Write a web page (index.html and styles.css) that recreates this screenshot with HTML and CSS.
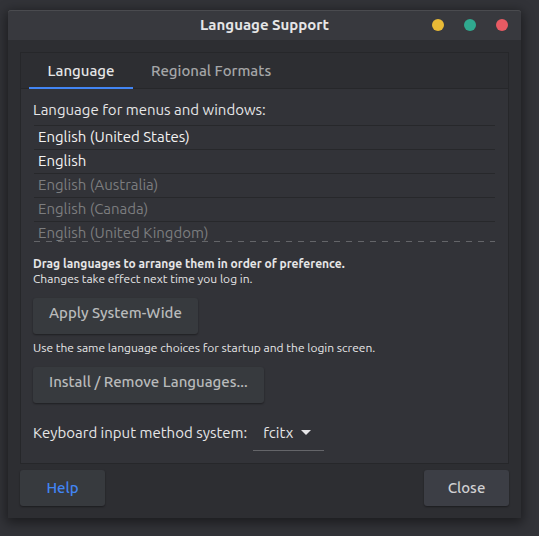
FILE: index.html
```html
<!DOCTYPE html>
<html lang="en">
<head>
<meta charset="utf-8">
<meta name="viewport" content="width=device-width, initial-scale=1">
<title>Language Support</title>
<link rel="stylesheet" href="styles.css">
</head>
<body>
<main class="window">
  <header class="titlebar">
    <h1 class="title">Language Support</h1>
    <div class="controls">
      <button class="dot minimize" type="button" aria-label="Minimize"></button>
      <button class="dot maximize" type="button" aria-label="Maximize"></button>
      <button class="dot shut" type="button" aria-label="Close window"></button>
    </div>
  </header>
  <div class="content">
    <section class="notebook">
      <div class="tabs" role="tablist">
        <button class="tab active" type="button" role="tab" aria-selected="true">Language</button>
        <button class="tab" type="button" role="tab" aria-selected="false">Regional Formats</button>
      </div>
      <div class="page" role="tabpanel">
        <p class="label">Language for menus and windows:</p>
        <ul class="languages">
          <li>English (United States)</li>
          <li>English</li>
          <li class="inactive">English (Australia)</li>
          <li class="inactive">English (Canada)</li>
          <li class="inactive">English (United Kingdom)</li>
        </ul>
        <p class="hint"><strong>Drag languages to arrange them in order of preference.</strong><br>Changes take effect next time you log in.</p>
        <button class="button raised-text" type="button">Apply System-Wide</button>
        <p class="hint between">Use the same language choices for startup and the login screen.</p>
        <button class="button raised-text" type="button">Install / Remove Languages...</button>
        <div class="method">
          <label for="method">Keyboard input method system:</label>
          <div class="combo">
            <select id="method"><option>fcitx</option></select>
            <svg class="arrow" viewBox="0 0 10 5" aria-hidden="true"><path d="M0 0h10L5 5z"/></svg>
          </div>
        </div>
      </div>
    </section>
    <footer class="actions">
      <button class="button help" type="button">Help</button>
      <button class="button close" type="button">Close</button>
    </footer>
  </div>
</main>
</body>
</html>
```
FILE: styles.css
```css
* {
  box-sizing: border-box;
}

body {
  margin: 0;
  min-height: 100vh;
  padding: 10px 18px 18px 8px;
  background: #323338;
  color: #e6e6e7;
  font: 15px/20px "Ubuntu", "Noto Sans", sans-serif;
}

button,
select {
  border: 0;
  font: inherit;
  color: inherit;
}

p,
ul {
  margin: 0;
  padding: 0;
}

.window {
  background: #2d2e32;
  border-radius: 3px 3px 0 0;
  box-shadow: 0 3px 12px 2px rgba(0, 0, 0, 0.45);
}

.titlebar {
  display: grid;
  grid-template-columns: 1fr auto 1fr;
  align-items: center;
  height: 30px;
  padding: 0 13px;
  background: #38393e;
  box-shadow: inset 0 1px #4a4b4f;
  border-radius: 3px 3px 0 0;
}

.title {
  grid-column: 2;
  margin: 0;
  font-size: 15px;
  font-weight: 700;
}

.controls {
  display: flex;
  justify-content: flex-end;
  gap: 20px;
}

.dot {
  width: 12px;
  height: 12px;
  padding: 0;
  border-radius: 50%;
}

.minimize {
  background: #e9ba36;
}

.maximize {
  background: #30a98f;
}

.shut {
  background: #e85a63;
}

.content {
  padding: 12px;
}

.notebook {
  border: 1px solid #26272a;
  background: #323338;
}

.tabs {
  display: flex;
  height: 36px;
  padding-left: 8px;
  background: #2d2e32;
  border-bottom: 1px solid #26272a;
}

.tab {
  height: 36px;
  padding: 0 18px;
  background: none;
  color: #a5a6a8;
  font-weight: 500;
}

.active {
  min-width: 104px;
  color: #e6e6e7;
  border-bottom: 2px solid #4285f4;
  padding-top: 2px;
}

.page {
  padding: 12px;
}

.label {
  height: 24px;
  line-height: 18px;
}

.languages {
  height: 117px;
  margin: 0 1px;
  list-style: none;
  overflow: hidden;
  background: repeating-linear-gradient(90deg, #646569 0 6px, transparent 6px 12px) bottom / 100% 1px no-repeat;
}

.languages li {
  height: 24px;
  padding-left: 4px;
  border-top: 1px solid #27282b;
  line-height: 22px;
  color: #f2f2f2;
}

.languages .inactive {
  color: #7c7d7f;
}

.hint {
  padding-top: 14px;
  font-size: 12px;
  line-height: 15px;
}

.button {
  display: block;
  height: 36px;
  min-width: 85px;
  padding: 0 16px;
  border-radius: 3px;
  background: #373a3e;
  box-shadow: 0 1px 2px rgba(0, 0, 0, 0.4);
  color: #b9babb;
  font-weight: 500;
}

.raised-text {
  margin-top: 12px;
  padding-bottom: 6px;
}

.between {
  padding-top: 6px;
}

.method {
  display: flex;
  align-items: center;
  gap: 6px;
  margin-top: 12px;
}

.combo {
  display: flex;
  align-items: center;
  position: relative;
  border-bottom: 1px solid #646569;
}

.combo select {
  height: 35px;
  padding: 0 30px 0 10px;
  appearance: none;
  background: none;
}

.arrow {
  position: absolute;
  right: 13px;
  width: 10px;
  height: 5px;
  fill: #e6e6e7;
  pointer-events: none;
}

.actions {
  display: flex;
  justify-content: space-between;
  margin-top: 6px;
}

.help {
  color: #4285f4;
}

.close {
  background: #3c3e45;
  color: #d0d0d2;
}
```
